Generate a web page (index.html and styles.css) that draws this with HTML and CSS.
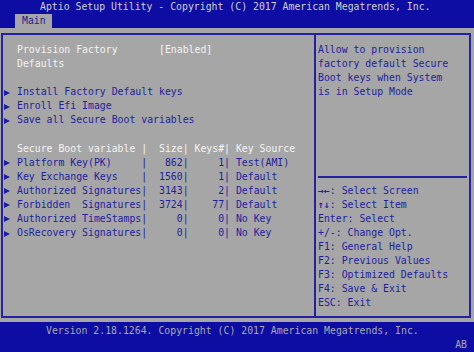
FILE: index.html
```html
<!DOCTYPE html>
<html lang="en">
<head>
    <meta charset="UTF-8">
    <meta name="viewport" content="width=device-width, initial-scale=1.0">
    <title>Aptio Setup Utility</title>
    <link rel="stylesheet" href="styles.css">
</head>
<body>
    <div class="topbar">
        <div class="title">Aptio Setup Utility - Copyright (C) 2017 American Megatrends, Inc.</div>
        <div class="tabs">
            <div class="tab">Main</div>
        </div>
    </div>

    <div class="screen">
        <div class="frame">
            <div class="left">
                <div class="line white">Provision Factory       [Enabled]</div>
                <div class="line white">Defaults</div>
                <div class="line"></div>
                <div class="line item">Install Factory Default keys</div>
                <div class="line item">Enroll Efi Image</div>
                <div class="line item">Save all Secure Boot variables</div>
                <div class="line"></div>
                <div class="line white">Secure Boot variable |  Size| Keys#| Key Source</div>
                <div class="line item">Platform Key(PK)     |   862|     1| Test(AMI)</div>
                <div class="line item">Key Exchange Keys    |  1560|     1| Default</div>
                <div class="line item">Authorized Signatures|  3143|     2| Default</div>
                <div class="line item">Forbidden  Signatures|  3724|    77| Default</div>
                <div class="line item">Authorized TimeStamps|     0|     0| No Key</div>
                <div class="line item">OsRecovery Signatures|     0|     0| No Key</div>
            </div>
            <div class="right">
                <div class="help">
                    <div class="line">Allow to provision</div>
                    <div class="line">factory default Secure</div>
                    <div class="line">Boot keys when System</div>
                    <div class="line">is in Setup Mode</div>
                </div>
                <div class="sep"></div>
                <div class="keys">
                    <div class="line"><b>&rarr;&larr;</b>: Select Screen</div>
                    <div class="line"><b>&uarr;&darr;</b>: Select Item</div>
                    <div class="line">Enter: Select</div>
                    <div class="line">+/-: Change Opt.</div>
                    <div class="line">F1: General Help</div>
                    <div class="line">F2: Previous Values</div>
                    <div class="line">F3: Optimized Defaults</div>
                    <div class="line">F4: Save &amp; Exit</div>
                    <div class="line">ESC: Exit</div>
                </div>
            </div>
        </div>
    </div>

    <div class="bottombar">
        <div class="version">Version 2.18.1264. Copyright (C) 2017 American Megatrends, Inc.</div>
        <div class="kbd">AB</div>
    </div>
</body>
</html>
```

FILE: styles.css
```css
body {
    margin: 0;
    width: 474px;
    height: 352px;
    overflow: hidden;
    font-family: 'DejaVu Sans Mono', 'Liberation Mono', monospace;
    font-size: 9.84px;
    line-height: 14.08px;
    background-color: #a6a6a6;
    color: #1e1ea0;
}
.line {
    height: 14.08px;
    white-space: pre;
}
.topbar {
    background-color: #0d0da4;
    height: 28px;
    color: #d0d0d0;
}
.title {
    padding-left: 40px;
    height: 14px;
}
.tabs {
    display: flex;
}
.tab {
    margin-left: 15px;
    width: 30px;
    padding-left: 7px;
    height: 14px;
    background-color: #a6a6a6;
    color: #22228e;
}
.screen {
    height: 294px;
    padding: 5px 3px 4px 1px;
    box-sizing: border-box;
}
.frame {
    height: 100%;
    box-sizing: border-box;
    border: 2px solid #2222a2;
    display: flex;
}
.left {
    width: 313px;
    padding: 8px 0 0 14px;
    box-sizing: border-box;
    border-right: 2px solid #2222a2;
}
.right {
    flex: 1;
    padding: 8px 0 0 2px;
}
.white {
    color: #f4f4f4;
}
.item::before {
    content: "";
    display: inline-block;
    margin-left: -13px;
    margin-right: 7px;
    border-left: 6px solid #1e1ea0;
    border-top: 3.5px solid transparent;
    border-bottom: 3.5px solid transparent;
    vertical-align: -0.5px;
}
.help {
    height: 126.72px;
}
.sep {
    height: 14.08px;
    display: flex;
    align-items: center;
    margin-right: 2px;
}
.sep::after {
    content: "";
    flex: 1;
    border-top: 2px solid #2222a2;
}
.keys b {
    font-weight: bold;
}
.bottombar {
    background-color: #0d0da4;
    height: 30px;
    padding-top: 2px;
    box-sizing: border-box;
    color: #aaaaaa;
}
.version {
    padding-left: 46px;
    height: 14.08px;
}
.kbd {
    text-align: right;
    padding-right: 7px;
    height: 14px;
}
```
